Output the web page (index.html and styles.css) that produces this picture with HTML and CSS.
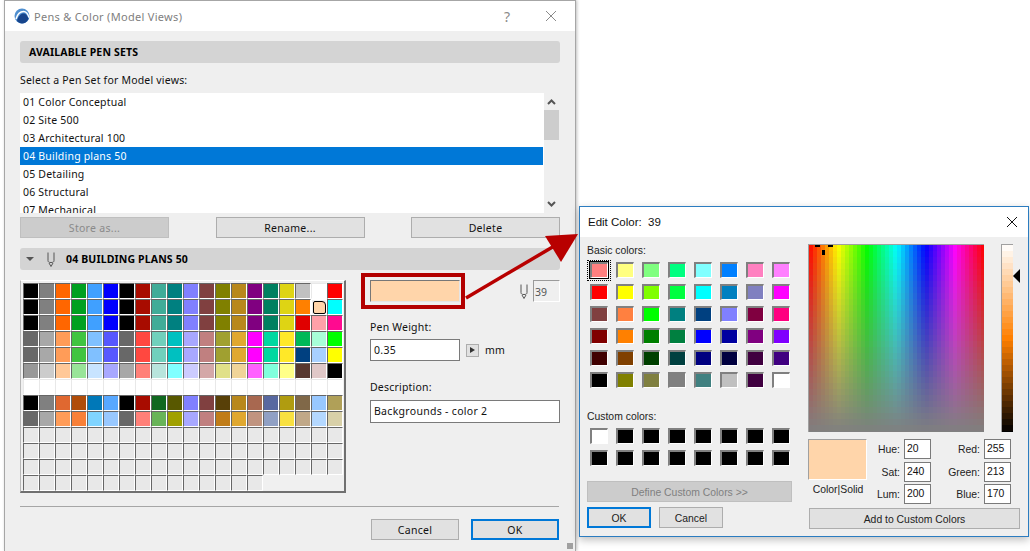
FILE: index.html
```html
<!DOCTYPE html>
<html lang="en">
<head>
    <meta charset="UTF-8">
    <title>Pens &amp; Color</title>
    <link rel="stylesheet" href="styles.css">
</head>
<body>
    <div class="window pens-window">
        <div class="titlebar">
            <svg class="app-logo" width="16" height="16" viewBox="0 0 16 16">
                <circle cx="8" cy="8" r="7.5" fill="#4f8fd0"/>
                <path d="M3 13C4 8 7 5.5 9.5 5.5C12 5.5 14 8 14.5 11C13 14 10.5 15.5 8 15.5C6 15.5 4.5 14.5 3 13Z" fill="#17458c"/>
                <path d="M2 11C3.5 6 6.5 3.5 9.5 3.5C12 3.5 14 6 15 9.5" stroke="#ffffff" stroke-width="1.5" fill="none"/>
            </svg>
            <span class="title-text">Pens &amp; Color (Model Views)</span>
            <span class="help-btn">?</span>
            <svg class="close-btn" width="12" height="12" viewBox="0 0 12 12"><path d="M1 1L11 11M11 1L1 11" stroke="#8a8a8a" fill="none"/></svg>
        </div>
        <div class="pens-body">
            <div class="section-head"><span class="section-title">AVAILABLE PEN SETS</span></div>
            <div class="field-label set-label">Select a Pen Set for Model views:</div>
            <div class="set-list-wrap">
                <ul class="set-list">
                    <li>01 Color Conceptual</li>
                    <li>02 Site 500</li>
                    <li>03 Architectural 100</li>
                    <li class="selected">04 Building plans 50</li>
                    <li>05 Detailing</li>
                    <li>06 Structural</li>
                    <li>07 Mechanical</li>
                </ul>
                <div class="scrollbar">
                    <svg class="scroll-arrow" width="9" height="6" viewBox="0 0 9 6"><path d="M1 5L4.5 1.5L8 5" stroke="#555" stroke-width="2" fill="none"/></svg>
                    <div class="scroll-thumb"></div>
                    <svg class="scroll-arrow scroll-arrow-down" width="9" height="6" viewBox="0 0 9 6"><path d="M1 1L4.5 4.5L8 1" stroke="#555" stroke-width="2" fill="none"/></svg>
                </div>
            </div>
            <div class="set-buttons">
                <button class="btn btn-disabled">Store as...</button>
                <button class="btn">Rename...</button>
                <button class="btn">Delete</button>
            </div>
            <div class="section-head pen-head">
                <span class="disclosure"></span>
                <svg class="pen-icon" width="8" height="15" viewBox="0 0 8 15"><path d="M1 .5V8.5C1 10 2 10.5 4 10.5S7 10 7 8.5V.5M2 11L4 14.5L6 11" stroke="#555" fill="none"/></svg>
                <span class="section-title">04 BUILDING PLANS 50</span>
            </div>
            <div class="pen-row">
                <div class="pen-palette" id="penPalette"></div>
                <div class="pen-detail">
                    <div class="swatch-row">
                        <div class="pen-swatch"></div>
                        <svg class="pen-icon-small" width="8" height="15" viewBox="0 0 8 15"><path d="M1 .5V8.5C1 10 2 10.5 4 10.5S7 10 7 8.5V.5M2 11L4 14.5L6 11" stroke="#555" fill="none"/></svg>
                        <div class="pen-number">39</div>
                    </div>
                    <div class="field-label weight-label">Pen Weight:</div>
                    <div class="weight-row">
                        <div class="text-box weight-box">0.35</div>
                        <span class="step-btn"></span>
                        <span class="unit">mm</span>
                    </div>
                    <div class="field-label desc-label">Description:</div>
                    <div class="text-box desc-box">Backgrounds - color 2</div>
                </div>
            </div>
            <div class="footer-rule"></div>
            <div class="footer-buttons">
                <button class="btn">Cancel</button>
                <button class="btn btn-default">OK</button>
            </div>
        </div>
        <div class="grip"></div>
    </div>

    <div class="window color-window">
        <div class="titlebar color-titlebar">
            <span class="color-title">Edit Color:&nbsp; 39</span>
            <svg class="close-btn" width="12" height="12" viewBox="0 0 12 12"><path d="M1 1L11 11M11 1L1 11" stroke="#111" fill="none"/></svg>
        </div>
        <div class="color-body">
            <div class="color-left">
                <div class="small-label">Basic colors:</div>
                <div class="color-grid" id="basicColors"></div>
                <div class="small-label custom-label">Custom colors:</div>
                <div class="color-grid" id="customColors"></div>
                <button class="btn-win btn-define">Define Custom Colors &gt;&gt;</button>
                <div class="dialog-buttons">
                    <button class="btn-win btn-default">OK</button>
                    <button class="btn-win">Cancel</button>
                </div>
            </div>
            <div class="color-right">
                <div class="picker-row">
                    <div class="spectrum">
                        <canvas id="spectrum" width="175" height="187"></canvas>
                        <span class="cross cross-left"></span>
                        <span class="cross cross-right"></span>
                        <span class="cross cross-bottom"></span>
                    </div>
                    <div class="lum-bar"><canvas id="lumBar" width="11" height="187"></canvas></div>
                    <span class="lum-arrow"></span>
                </div>
                <div class="value-row">
                    <div class="preview-col">
                        <div class="color-preview"></div>
                        <div class="small-label preview-caption">Color|Solid</div>
                    </div>
                    <div class="value-grid">
                        <label>Hue:</label><div class="value-box">20</div>
                        <label>Red:</label><div class="value-box">255</div>
                        <label>Sat:</label><div class="value-box">240</div>
                        <label>Green:</label><div class="value-box">213</div>
                        <label>Lum:</label><div class="value-box">200</div>
                        <label>Blue:</label><div class="value-box">170</div>
                    </div>
                </div>
                <button class="btn-win btn-add">Add to Custom Colors</button>
            </div>
        </div>
    </div>

    <svg class="callout" width="1030" height="551" viewBox="0 0 1030 551">
        <path d="M466 298L556 245" stroke="#b80000" stroke-width="3.5" fill="none"/>
        <path d="M545 236L578 234L561 262Z" fill="#b80000"/>
    </svg>

    <script src="app.js"></script>
</body>
</html>
```

FILE: styles.css
```css
* {
    box-sizing: border-box;
}
html, body {
    margin: 0;
    padding: 0;
    width: 1030px;
    height: 551px;
    overflow: hidden;
    background-color: #ffffff;
}
body {
    position: relative;
    font-family: "Noto Sans", "Open Sans", sans-serif;
    font-size: 10.5px;
    color: #111111;
}
.window {
    position: absolute;
    background-color: #efefef;
    overflow: hidden;
}
.pens-window {
    left: 4px;
    top: 0;
    width: 572px;
    height: 551px;
    border: 1px solid #a6a6a6;
    border-bottom: none;
    box-shadow: 1px 0 3px rgba(0,0,0,0.25);
}
.color-window {
    left: 579px;
    top: 206px;
    width: 450px;
    height: 331px;
    border: 1px solid #2b7cc0;
    box-shadow: 0 3px 8px rgba(0,0,0,0.25);
}
.titlebar {
    display: flex;
    align-items: center;
    height: 30px;
    padding-left: 9px;
    background-color: #ffffff;
}
.app-logo {
    margin-right: 4px;
}
.title-text {
    flex: 1;
    font-size: 11px;
    letter-spacing: 0.3px;
    color: #808080;
}
.help-btn {
    width: 12px;
    margin-right: 32px;
    font-size: 14px;
    text-align: center;
    color: #8a8a8a;
}
.close-btn {
    margin-right: 18px;
}
.pens-body {
    display: flex;
    flex-direction: column;
    padding: 10px 15px 0;
}
.section-head {
    display: flex;
    align-items: center;
    height: 22px;
    padding-left: 9px;
    background-color: #d4d4d4;
    border-radius: 3px;
}
.section-title {
    font-weight: 700;
    font-size: 10.5px;
    letter-spacing: 0.15px;
    color: #000000;
}
.field-label {
    font-size: 10.5px;
    letter-spacing: 0.2px;
    line-height: 14px;
}
.set-label {
    margin-top: 10px;
    margin-bottom: 6px;
}
.set-list-wrap {
    display: flex;
    height: 120px;
    background-color: #ffffff;
}
.set-list {
    flex: 1;
    margin: 0;
    padding: 0;
    list-style: none;
    overflow: hidden;
}
.set-list li {
    height: 18px;
    padding-left: 3px;
    margin-right: 1px;
    line-height: 18px;
    letter-spacing: 0.2px;
}
.set-list li.selected {
    background-color: #0078d7;
    color: #ffffff;
}
.scrollbar {
    display: flex;
    flex-direction: column;
    align-items: flex-start;
    width: 16px;
    background-color: #efefef;
}
.scroll-arrow {
    flex: none;
    margin-top: 6px;
    margin-bottom: 5px;
    margin-left: 3px;
}
.scroll-arrow-down {
    margin-top: auto;
    margin-bottom: 6px;
}
.scroll-thumb {
    width: 15px;
    height: 30px;
    background-color: #cdcdcd;
}
.set-buttons {
    display: flex;
    justify-content: space-between;
    margin-top: 4px;
}
.btn {
    width: 149px;
    height: 21px;
    padding: 0;
    font-family: inherit;
    font-size: 10.5px;
    letter-spacing: 0.3px;
    color: #111111;
    background-color: #e1e1e1;
    border: 1px solid #adadad;
}
.btn-disabled {
    color: #8a8a8a;
    background-color: #cccccc;
    border-color: #bfbfbf;
}
.btn-default {
    border: 2px solid #0078d7;
}
.pen-head {
    margin-top: 10px;
    padding-left: 6px;
}
.disclosure {
    width: 0;
    height: 0;
    margin-right: 13px;
    border-left: 4px solid transparent;
    border-right: 4px solid transparent;
    border-top: 4px solid #555555;
}
.pen-icon {
    margin-right: 11px;
}
.pen-row {
    display: flex;
    margin-top: 10px;
}
.pen-palette {
    display: grid;
    grid-template-columns: repeat(20, 16px);
    grid-auto-rows: 16px;
    width: 326px;
    height: 213px;
    padding: 2px 1px 0 2px;
    background-color: #f0f0f0;
    border-top: 1px solid #ffffff;
    border-left: 1px solid #b8b8b8;
    border-right: 2px solid #707070;
    border-bottom: 2px solid #707070;
}
.pen-cell {
    position: relative;
    border-top: 1px solid #666666;
    border-left: 1px solid #666666;
    border-right: 1px solid #ffffff;
    border-bottom: 1px solid #ffffff;
}
.pen-cell-white {
    border-top-color: #e8e8e8;
    border-left-color: #e8e8e8;
}
.pen-cell-current {
    border-color: #ffffff;
}
.pen-cell-current::after {
    content: "";
    position: absolute;
    inset: 1px 0 0 1px;
    border: 1px solid #000000;
    border-radius: 2px 4px 2px 2px;
    background-color: #ffd5aa;
}
.pen-detail {
    display: flex;
    flex-direction: column;
    width: 190px;
    margin-left: 24px;
}
.swatch-row {
    display: flex;
    align-items: center;
    height: 22px;
}
.pen-swatch {
    position: relative;
    width: 90px;
    height: 22px;
    background-color: #ffd5aa;
    border-top: 1px solid #777777;
    border-left: 1px solid #777777;
    border-right: 1px solid #e4e4e4;
    border-bottom: 1px solid #e4e4e4;
}
.pen-swatch::after {
    content: "";
    position: absolute;
    top: -8px;
    left: -10px;
    right: -6px;
    bottom: -8px;
    border: 4px solid #b30000;
}
.pen-icon-small {
    margin-left: 60px;
}
.pen-number {
    width: 27px;
    height: 22px;
    margin-left: 5px;
    padding-left: 1px;
    line-height: 22px;
    color: #555555;
    border-top: 1px solid #9a9a9a;
    border-left: 1px solid #9a9a9a;
    border-right: 1px solid #ffffff;
    border-bottom: 1px solid #ffffff;
}
.weight-label {
    margin-top: 18px;
}
.weight-row {
    display: flex;
    align-items: center;
    margin-top: 5px;
}
.text-box {
    height: 23px;
    padding-left: 3px;
    line-height: 21px;
    letter-spacing: 0.3px;
    background-color: #ffffff;
    border: 1px solid #7a7a7a;
}
.weight-box {
    width: 90px;
    height: 22px;
    line-height: 20px;
}
.step-btn {
    position: relative;
    width: 13px;
    height: 13px;
    margin-left: 6px;
    background-color: #e1e1e1;
    border: 1px solid #adadad;
}
.step-btn::after {
    content: "";
    position: absolute;
    left: 3px;
    top: 2px;
    border-top: 3.5px solid transparent;
    border-bottom: 3.5px solid transparent;
    border-left: 5px solid #333333;
}
.unit {
    margin-left: 6px;
    letter-spacing: 0.3px;
}
.desc-label {
    margin-top: 19px;
}
.desc-box {
    margin-top: 6px;
}
.footer-rule {
    height: 1px;
    margin-top: 13px;
    margin-right: 1px;
    background-color: #a6a6a6;
}
.footer-buttons {
    display: flex;
    justify-content: flex-end;
    gap: 12px;
    margin-top: 12px;
    margin-right: 1px;
}
.footer-buttons .btn {
    width: 88px;
}
.grip {
    position: absolute;
    right: 2px;
    bottom: 2px;
    width: 6px;
    height: 6px;
    background-image: radial-gradient(circle, #a0a0a0 1px, transparent 1px);
    background-size: 2px 2px;
}

/* edit color dialog */
.color-titlebar {
    padding-left: 8px;
}
.color-title {
    flex: 1;
    font-family: "Liberation Sans", "Noto Sans", sans-serif;
    font-size: 11.5px;
    color: #111111;
}
.color-titlebar .close-btn {
    margin-right: 10px;
}
.color-body {
    display: flex;
    gap: 16px;
    padding: 0 7px;
}
.color-left {
    width: 205px;
}
.small-label {
    font-family: "Liberation Sans", "Noto Sans", sans-serif;
    font-size: 10.4px;
    line-height: 14px;
    color: #222222;
}
.color-left > .small-label:first-child {
    margin-top: 7px;
}
.custom-label {
    margin-top: 16px;
}
.color-grid {
    display: grid;
    grid-template-columns: repeat(8, 26px);
    grid-auto-rows: 22px;
    margin-top: 4px;
    margin-left: 3px;
}
.color-cell {
    position: relative;
    width: 18px;
    height: 16px;
    border-top: 2px solid #808080;
    border-left: 2px solid #808080;
    border-right: 1px solid #ffffff;
    border-bottom: 1px solid #ffffff;
}
.color-cell-focus {
    outline: 1px solid #000000;
    outline-offset: 0;
}
.color-cell-focus::after {
    content: "";
    position: absolute;
    top: -4px;
    left: -5px;
    right: -4px;
    bottom: -4px;
    border: 1px dotted #000000;
}
.btn-win {
    height: 21px;
    padding: 1px 0 0;
    font-family: "Liberation Sans", "Noto Sans", sans-serif;
    font-size: 10.4px;
    color: #222222;
    background-color: #e1e1e1;
    border: 1px solid #adadad;
}
.btn-win.btn-default {
    border: 2px solid #0078d7;
}
.btn-define {
    display: block;
    width: 205px;
    margin-top: 9px;
    color: #808080;
    background-color: #cccccc;
    border-color: #bfbfbf;
}
.dialog-buttons {
    display: flex;
    gap: 8px;
    margin-top: 5px;
}
.dialog-buttons .btn-win {
    width: 64px;
}
.color-right {
    width: 212px;
    padding-top: 7px;
}
.picker-row {
    display: flex;
    position: relative;
    gap: 17px;
    height: 188px;
}
.spectrum {
    position: relative;
    width: 176px;
    height: 188px;
    border-top: 1px solid #a0a0a0;
    border-left: 1px solid #a0a0a0;
}
.spectrum canvas, .lum-bar canvas {
    display: block;
}
.cross {
    position: absolute;
    background-color: #000000;
}
.cross-left {
    left: 6px;
    top: 0;
    width: 5px;
    height: 2px;
}
.cross-right {
    left: 19px;
    top: 0;
    width: 5px;
    height: 2px;
}
.cross-bottom {
    left: 13px;
    top: 5px;
    width: 3px;
    height: 5px;
}
.lum-bar {
    width: 12px;
    height: 188px;
    border-top: 1px solid #a0a0a0;
    border-left: 1px solid #a0a0a0;
}
.lum-arrow {
    position: absolute;
    left: 205px;
    top: 25px;
    border-top: 7px solid transparent;
    border-bottom: 7px solid transparent;
    border-right: 7px solid #000000;
}
.value-row {
    display: flex;
    margin-top: 7px;
}
.preview-col {
    width: 60px;
}
.color-preview {
    width: 59px;
    height: 41px;
    background-color: #ffd5aa;
    border-top: 1px solid #a0a0a0;
    border-left: 1px solid #a0a0a0;
    border-right: 1px solid #ffffff;
    border-bottom: 1px solid #ffffff;
}
.preview-caption {
    margin-top: 3px;
    text-align: center;
}
.value-grid {
    display: grid;
    grid-template-columns: 32px 27px 45px 27px;
    grid-auto-rows: 20px;
    column-gap: 4px;
    row-gap: 2.5px;
}
.value-grid label {
    font-family: "Liberation Sans", "Noto Sans", sans-serif;
    font-size: 10.4px;
    line-height: 21px;
    text-align: right;
    color: #222222;
}
.value-box {
    padding-left: 2px;
    font-family: "Liberation Sans", "Noto Sans", sans-serif;
    font-size: 10.4px;
    line-height: 17px;
    background-color: #ffffff;
    border: 1px solid #7a7a7a;
}
.btn-add {
    display: block;
    width: 211px;
    margin-top: 4px;
    margin-left: 1px;
}
.callout {
    position: absolute;
    left: 0;
    top: 0;
    pointer-events: none;
}
```

FILE: app.js
```js
// pen table, one string per row
const penRows = [
    '000000 808080 ff6600 00a020 40a0ff 0000ff 000000 a80c00 40ac98 008080 8080ff 804040 808000 b8881c 800080 008060 ded414 c0c0c0 ffffff ff0000',
    '000000 808080 ff6600 00a020 40a0ff 0000ff 000000 a80c00 40ac98 008080 8080ff 804040 808000 b8881c 800080 008060 ded414 ff8000 current 00ffff',
    '000000 808080 ff6600 00a020 40a0ff 0000ff 000000 a80c00 40ac98 008080 8080ff 804040 808000 b8881c 800080 008060 ded414 e00000 ffa0a8 ff0a90',
    '686868 a8a8a8 ff9c58 40c440 80c0ff 5858ff 686868 ff4840 70d0bc 00c0c0 a8a8ff c08080 a0a030 e0a830 ff00ff 00d8a0 ffe828 00b858 a8ffd8 00ff00',
    '686868 a8a8a8 ff9c58 40c440 80c0ff 5858ff 686868 ff4840 70d0bc 00c0c0 a8a8ff c08080 a0a030 e0a830 ff00ff 00d8a0 ffe828 004080 a8d0ff ffff00',
    '989898 cccccc ffc898 98e498 c8e4ff a8a8ff a8a8a8 ff8078 b8e4dc 80ffff ccccff d4a8a8 e0e088 f0d498 ff60ff 80ffdc ffff88 583830 e0c8c8 000000',
    'ffffff ffffff ffffff ffffff ffffff ffffff ffffff ffffff ffffff ffffff ffffff ffffff ffffff ffffff ffffff ffffff ffffff ffffff ffffff ffffff',
    '000000 808080 e06830 b04c08 0078b8 58a8ff 000000 a80c00 106820 585800 8080ff 804040 584008 b8881c a86850 5868a0 b09c10 806848 98c8ff b0a058',
    '686868 a8a8a8 ff9c58 f88038 80d4ff 98c8ff 686868 ff8078 68b458 a0a000 a8a8ff c08080 c07c18 e0a830 c09480 90a0c4 f8e040 c0a888 b4d8ff d8d0a8'
];
const emptyRow = Array(20).fill('e8e8e8').join(' ');
penRows.push(emptyRow, emptyRow, emptyRow, Array(15).fill('e8e8e8').join(' '));

const basicColors = [
    'ff8080 ffff80 80ff80 00ff80 80ffff 0080ff ff80c0 ff80ff',
    'ff0000 ffff00 80ff00 00ff40 00ffff 0080c0 8080c0 ff00ff',
    '804040 ff8040 00ff00 008080 004080 8080ff 800040 ff0080',
    '800000 ff8000 008000 008040 0000ff 0000a0 800080 8000ff',
    '400000 804000 004000 004040 000080 000040 400040 400080',
    '000000 808000 808040 808080 408080 c0c0c0 400040 ffffff'
];
const customColors = [
    'ffffff 000000 000000 000000 000000 000000 000000 000000',
    '000000 000000 000000 000000 000000 000000 000000 000000'
];

function renderPens() {
    const box = document.getElementById('penPalette');
    penRows.forEach(row => {
        row.split(' ').forEach(color => {
            const cell = document.createElement('div');
            cell.className = 'pen-cell';
            if (color === 'current') {
                cell.classList.add('pen-cell-current');
            } else {
                cell.style.backgroundColor = '#' + color;
                if (color === 'ffffff') cell.classList.add('pen-cell-white');
            }
            box.appendChild(cell);
        });
    });
}

function renderColors(id, rows) {
    const box = document.getElementById(id);
    rows.forEach(row => {
        row.split(' ').forEach(color => {
            const cell = document.createElement('div');
            cell.className = 'color-cell';
            cell.style.backgroundColor = '#' + color;
            box.appendChild(cell);
        });
    });
}

// the dialog's picker is made of coarse blocks, not a smooth gradient
function drawSpectrum() {
    const canvas = document.getElementById('spectrum');
    const ctx = canvas.getContext('2d');
    for (let x = 0; x < canvas.width; x += 4) {
        for (let y = 0; y < canvas.height; y += 6) {
            const hue = (x + 2) / canvas.width * 360;
            const sat = 100 - (y + 3) / canvas.height * 100;
            ctx.fillStyle = `hsl(${hue}, ${sat}%, 50%)`;
            ctx.fillRect(x, y, 4, 6);
        }
    }
}

function drawLumBar() {
    const canvas = document.getElementById('lumBar');
    const ctx = canvas.getContext('2d');
    for (let y = 0; y < canvas.height; y += 6) {
        const lum = 100 - (y + 3) / canvas.height * 100;
        ctx.fillStyle = `hsl(30, 100%, ${lum}%)`;
        ctx.fillRect(0, y, canvas.width, 6);
    }
}

renderPens();
renderColors('basicColors', basicColors);
renderColors('customColors', customColors);
document.querySelector('#basicColors .color-cell').classList.add('color-cell-focus');
drawSpectrum();
drawLumBar();
```
